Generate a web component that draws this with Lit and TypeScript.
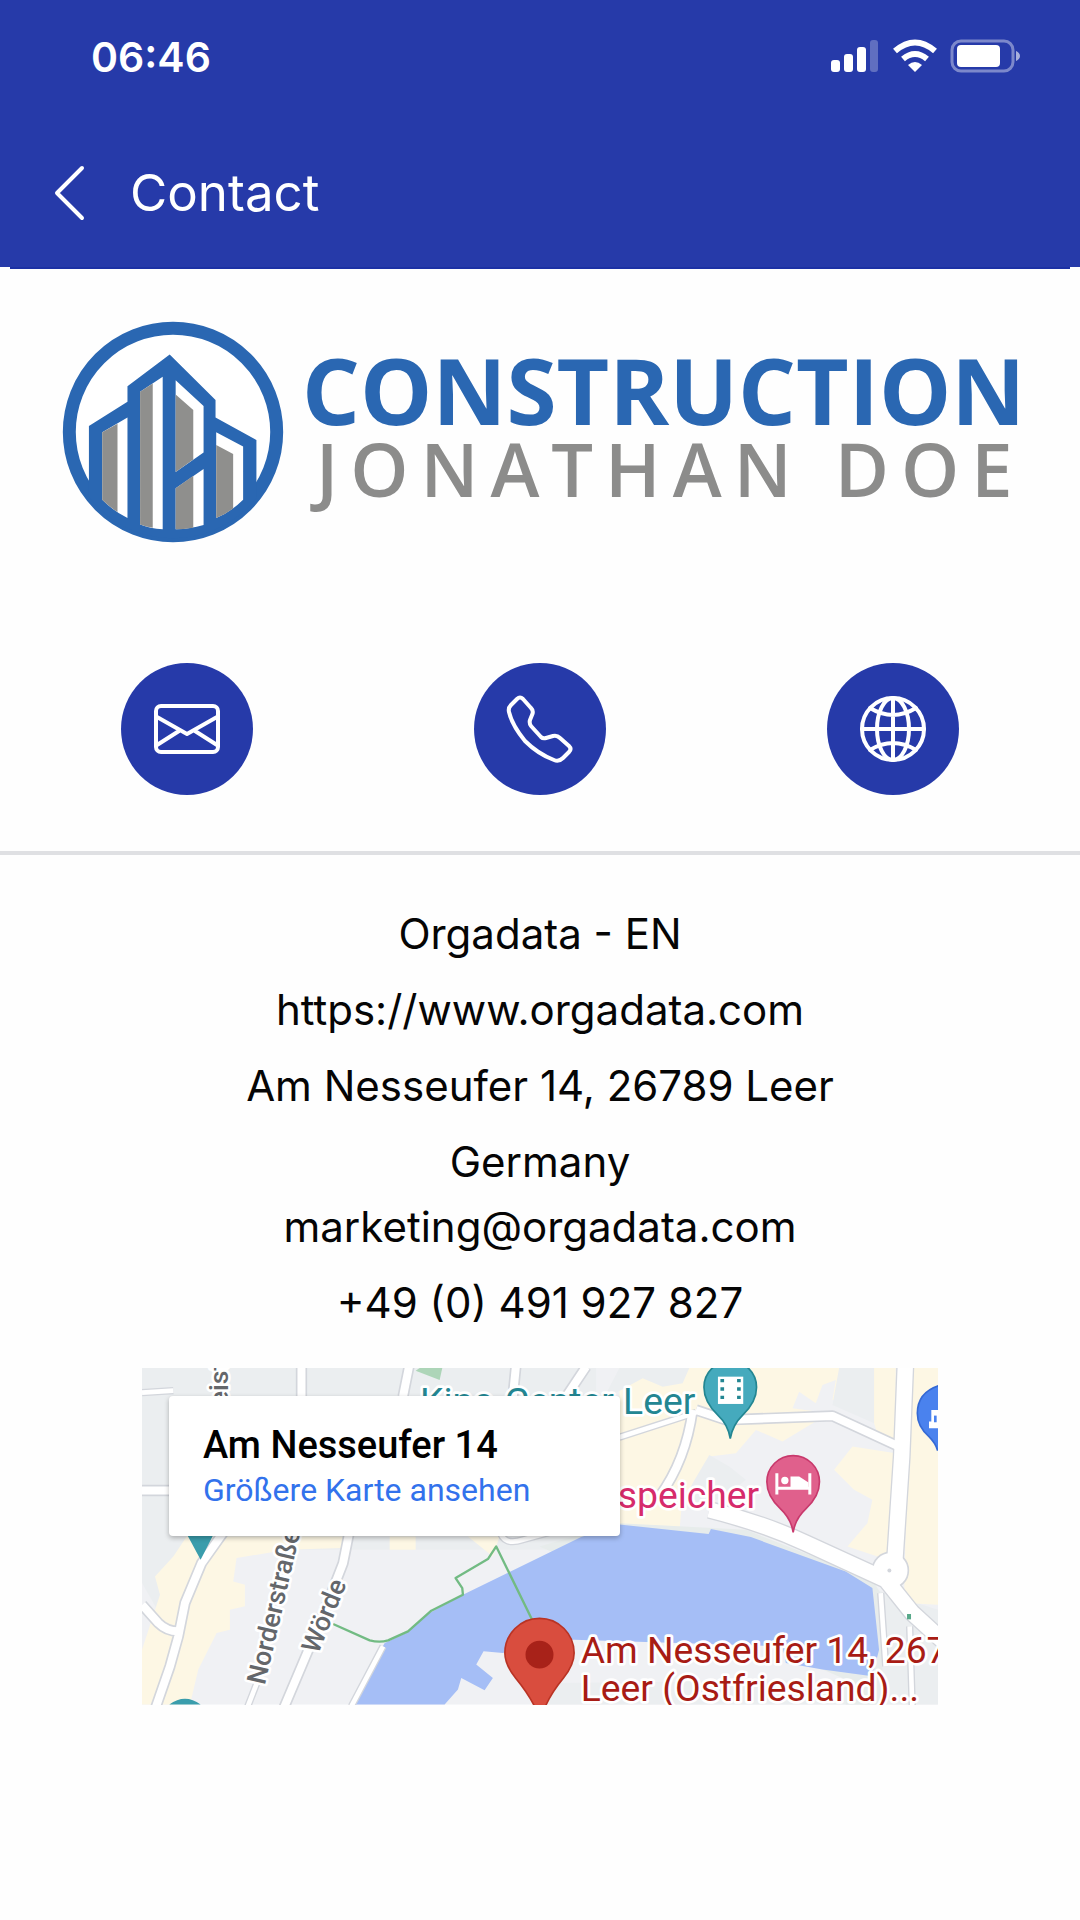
import { LitElement, html, svg, css } from "lit";
import { customElement } from "lit/decorators.js";

const mailIcon = svg`
  <rect x="35" y="43" width="62" height="46" rx="5" />
  <path d="M36 54 L66 71 L96 54 M36 82 L58 68 M96 82 L74 68" />`;

const phoneIcon = svg`
  <path d="M43 36 Q46 33 49 36 L57 45 Q60 48 58 52 L56 57 Q55 60 57 63 L67 74 Q69 76 72 75 L79 73 Q83 72 86 75 L95 83 Q98 86 95 89 L89 95 Q85 99 80 97 Q64 91 51 78 Q38 62 35 49 Q34 45 37 42 Z" />`;

const globeIcon = svg`
  <circle cx="66" cy="66" r="31" />
  <ellipse cx="66" cy="66" rx="16" ry="31" />
  <path d="M66 35 V97 M35 66 H97 M43 45 Q66 59 89 45 M43 87 Q66 73 89 87" />`;

@customElement("status-bar")
export class StatusBar extends LitElement {
  static styles = css`
    :host { display: flex; justify-content: space-between; align-items: flex-start; padding: 32px 60px 0 91px; color: #fff; }
    .time { font-size: 41px; line-height: 50px; font-weight: 600; }
    .signals { width: 190px; height: 34px; margin-top: 7px; display: block; }
  `;
  render() {
    return html`
      <div class="time">06:46</div>
      <svg class="signals" viewBox="0 0 190 34" fill="#fff" aria-hidden="true">
        <rect x="1" y="21" width="9" height="12" rx="3" />
        <rect x="14" y="15" width="9" height="18" rx="3" />
        <rect x="27" y="8" width="9" height="25" rx="3" />
        <rect x="40" y="1" width="8" height="32" rx="3" opacity="0.27" />
        <path d="M85 33 L78 26 Q85 20 92 26 Z" />
        <path d="M73 20 Q85 10 97 20" fill="none" stroke="#fff" stroke-width="6" />
        <path d="M65 12 Q85 -5 105 12" fill="none" stroke="#fff" stroke-width="6" />
        <rect x="122" y="2" width="61" height="30" rx="9" fill="none" stroke="#fff" stroke-width="3" opacity="0.4" />
        <rect x="127" y="6" width="43" height="22" rx="4" />
        <path d="M186 12 Q190 14 190 17 Q190 20 186 22 Z" opacity="0.6" />
      </svg>
    `;
  }
}

@customElement("company-logo")
export class CompanyLogo extends LitElement {
  static styles = css`
    :host { display: flex; gap: 18px; align-items: flex-start; font-family: "Open Sans", sans-serif; }
    .mark { width: 222px; height: 222px; flex: none; display: block; }
    .words { display: flex; flex-direction: column; padding-top: 17px; white-space: nowrap; }
    .name { font-size: 91px; line-height: 104px; font-weight: 700; color: #2a67b2; }
    .owner { font-size: 74px; line-height: 54px; font-weight: 600; color: #8c8c8b; letter-spacing: 12px; padding-left: 14px; }
  `;
  render() {
    return html`
      <svg class="mark" viewBox="67 62 664 668" aria-hidden="true">
        <clipPath id="disc"><circle cx="399" cy="396" r="320" /></clipPath>
        <circle cx="399" cy="396" r="312" fill="#fff" stroke="#2a67b2" stroke-width="39" />
        <path clip-path="url(#disc)" fill="#2a67b2"
          d="M146 730 V378 L262 305 V258 L389 163 L527 300 V352 L650 420 V730 Z" />
        <path fill="#fff" d="M186 397 L262 352 V655 Q220 634 186 600 Z M300 275 L368 230 V689 Q330 686 300 674 Z M407 240 L491 318 V458 L407 516 Z M407 565 L491 507 V676 Q450 688 407 689 Z M529 397 L610 440 V600 Q575 635 529 655 Z" />
        <path fill="#8f8f8d" d="M186 397 L232 371 V637 Q206 620 186 600 Z M300 275 L338 250 V684 Q318 681 300 674 Z M407 283 L460 330 V479 L407 516 Z M407 565 L460 528 V684 Q430 689 407 689 Z M529 435 L580 462 V626 Q556 644 529 655 Z" />
      </svg>
      <div class="words">
        <div class="name">CONSTRUCTION</div>
        <div class="owner">JONATHAN DOE</div>
      </div>
    `;
  }
}

@customElement("location-map")
export class LocationMap extends LitElement {
  static styles = css`
    :host { display: block; position: relative; overflow: hidden; font-family: Roboto, sans-serif; }
    .map { display: block; width: 100%; height: auto; }
    .card { position: absolute; left: 27px; top: 28px; width: 451px; height: 140px; box-sizing: border-box; padding: 27px 34px; background: #fff; border-radius: 4px; box-shadow: 0 2px 5px rgba(0, 0, 0, 0.28); white-space: nowrap; }
    .place { font-size: 38px; line-height: 44px; font-weight: 500; color: #000; }
    .larger { display: block; font-size: 32px; line-height: 46px; color: #3272ec; text-decoration: none; }
    .label { font-size: 112px; stroke: #fff; stroke-width: 16px; stroke-linejoin: round; paint-order: stroke; }
    .street { font-size: 80px; font-weight: 500; fill: #64676b; }
    .teal { fill: #238692; }
    .pink { fill: #d62b6b; }
    .red { fill: #a81c15; }
    .edge { fill: none; stroke: #d3d6dc; stroke-linejoin: round; }
    .road { fill: none; stroke: #fff; stroke-linejoin: round; }
    .trail { fill: none; stroke: #72bb83; stroke-width: 7px; stroke-linejoin: round; }
  `;
  render() {
    const wide = "M2330 20 L2318 320 L2295 670 M1740 480 Q1900 520 2030 580 L2270 690 L2350 790 L2460 890";
    const medium = "M300 520 L215 640 L165 760 L145 860 L120 950 L75 1080 M36 765 L85 820 Q110 845 145 845 M660 540 L640 640 L570 820 L460 1080 M515 40 V140 M840 40 L820 140 M1160 40 L1150 140 M36 422 H120 M1370 50 L1310 140 M1700 180 L1790 210 L2110 198 L2310 290 M1690 180 Q1670 330 1590 440";
    const narrow = "M36 128 L130 122 M1470 262 L1700 188 M385 990 L350 1080 M1110 540 Q1120 590 1180 570 L1290 540 M760 890 L665 1070 M2255 730 L2270 950 M2342 830 L2350 1080";
    return html`
      <svg class="map" viewBox="36 54 2391 1011" role="img" aria-label="Am Nesseufer 14, Leer">
        <rect x="36" y="54" width="2391" height="1011" fill="#f0f1f4" />
        <path fill="#ebeef0" d="M36 54 H1400 V600 H300 L150 900 L36 700 Z M2240 720 L2427 780 V1065 H1250 L1280 1000 L2240 990 Z" />
        <path fill="#fdf7e4" d="M170 560 H640 V595 L470 600 L320 625 L310 695 L345 705 V770 L300 780 V840 L260 850 L205 960 L180 1065 H36 V900 L90 735 L75 680 L130 620 Z M780 560 H858 V600 H780 Z M1015 560 H1110 L1090 620 Z" />
        <path fill="#fdf7e4" d="M1470 54 H2300 V280 L2245 252 L2235 220 L2230 170 L2110 150 L2120 90 L2080 105 L2060 160 L2010 125 L1990 175 L2100 190 L1960 275 L1880 240 L1820 310 L1740 320 L1720 400 L1660 430 L1650 550 L1470 530 Z M2170 290 L2300 310 L2275 630 L2155 590 L2215 520 L2230 450 L2175 420 L2115 360 Z M2340 54 H2427 V765 L2325 760 Z" />
        <path fill="#ebeef0" d="M1470 54 H1680 L1660 100 L1600 110 L1540 85 L1420 150 Z M1740 315 L1800 350 L1850 390 L1800 430 L1720 470 L1650 480 L1690 400 Z M2130 54 H2235 V220 L2110 165 Z" />
        <path fill="#e7eceb" d="M1230 590 L1470 520 L1850 540 L2230 690 L2260 740 V1065 H2150 V990 Z" />
        <path fill="#a5bef6" d="M675 1065 L725 950 L765 880 L830 850 L900 790 L1000 735 L1355 562 L1470 524 L1738 553 L1745 538 L1865 562 L2150 665 L2230 715 L2250 900 L2230 980 L2080 960 L1970 940 L1960 890 L1335 870 L1240 870 L1120 910 L1062 905 L1040 945 L1090 985 L1065 1022 L995 985 L985 1020 L945 1065 Z" />
        <path fill="#add5b8" d="M858 62 L870 54 H938 L930 90 Z" />
        <path class="edge" stroke-width="54" d=${wide} />
        <path class="edge" stroke-width="34" d=${medium} />
        <path class="edge" stroke-width="22" d=${narrow} />
        <circle cx="2284" cy="662" r="54" fill="#fff" stroke="#d3d6dc" stroke-width="5" />
        <path class="road" stroke-width="46" d=${wide} />
        <path class="road" stroke-width="24" d=${medium} />
        <path class="road" stroke-width="14" d=${narrow} />
        <circle cx="2281" cy="662" r="6" fill="#d3d6dc" />
        <rect x="2334" y="793" width="12" height="16" fill="#58a98a" />
        <path class="trail" d="M610 823 L720 872 Q750 880 775 872 L835 845 L905 783 L1000 735 L998 715 L978 685 L1075 628 L1100 590 L1210 815" />
        <path fill="#3a9dac" d="M172 556 H250 L212 630 Z M118 1065 Q165 1030 212 1065 Z" />

        <text class="label street" transform="translate(295 166) rotate(-90)">eist</text>
        <text class="label street" transform="translate(405 1008) rotate(-77)">Norderstraße</text>
        <text class="label street" transform="translate(565 915) rotate(-68)">Wörde</text>
        <text class="label teal" x="1698" y="193" text-anchor="end">Kino-Center Leer</text>
        <text class="label pink" x="1465" y="474">speicher</text>

        <path fill="#45aabd" stroke="#238692" stroke-width="5" d="M1803 266 Q1797 225 1765 195 Q1724 155 1724 112 A79 79 0 0 1 1882 112 Q1882 155 1841 195 Q1810 225 1803 266 Z" />
        <path fill="#fff" d="M1766 80 H1842 V162 H1766 Z" />
        <path stroke="#238692" stroke-width="11" stroke-dasharray="10 15" d="M1779 87 V162 M1829 87 V162" />
        <path fill="#e0608c" stroke="#c8396c" stroke-width="5" d="M1992 548 Q1986 507 1954 477 Q1913 440 1913 396 A79 79 0 0 1 2071 396 Q2071 440 2030 477 Q1998 507 1992 548 Z" />
        <path fill="none" stroke="#fff" stroke-width="9" d="M1943 370 V434 M2042 370 V434 M1943 415 H2042" />
        <path fill="#fff" d="M1984 412 V380 H2010 L2038 398 V412 Z" />
        <circle cx="1967" cy="392" r="11" fill="#fff" />
        <path fill="#4a82ee" stroke="#3569d4" stroke-width="5" d="M2435 105 Q2365 125 2365 190 Q2365 230 2400 260 Q2420 280 2425 300 H2435 Z" />
        <path fill="#fff" d="M2407 180 H2435 V235 H2400 V215 H2407 Z" />
        <rect x="2415" y="197" width="8" height="20" fill="#4a82ee" />
        <path fill="#d94d3e" stroke="#b93324" stroke-width="5" d="M1215 1070 Q1195 1030 1158 985 Q1126 945 1126 910 A104 104 0 0 1 1334 910 Q1334 945 1302 985 Q1265 1030 1248 1070 Z" />
        <circle cx="1230" cy="915" r="42" fill="#a82219" />

        <text class="label red" x="1354" y="940">Am Nesseufer 14, 26789</text>
        <text class="label red" x="1354" y="1054">Leer (Ostfriesland)...</text>
      </svg>
      <div class="card">
        <div class="place">Am Nesseufer 14</div>
        <a class="larger" href="#map">Größere Karte ansehen</a>
      </div>
    `;
  }
}

@customElement("app-root")
export class AppRoot extends LitElement {
  static styles = css`
    :host { display: block; min-height: 100vh; background: #fefefe; color: #050505; font-family: Inter, "Liberation Sans", sans-serif; }
    .top { background: #263aa9; }
    .nav { display: flex; align-items: center; gap: 42px; padding: 78px 52px 41px; height: 66px; color: #fff; }
    .back { display: block; width: 36px; height: 66px; padding: 0; border: 0; background: none; }
    .back svg { display: block; width: 36px; height: 66px; }
    .title { margin: 0; font-size: 51px; line-height: 66px; font-weight: 400; }
    .page { margin: 0 10px; border-top: 2px solid #1c31a4; }
    .logo { padding: 52px 52px 0; }
    .actions { display: grid; grid-template-columns: repeat(3, 1fr); justify-items: center; padding: 120px 0 56px; }
    .action { display: block; width: 132px; height: 132px; border-radius: 50%; background: #263aa9; }
    .action svg { display: block; width: 132px; height: 132px; fill: none; stroke: #fff; stroke-width: 4px; stroke-linecap: round; stroke-linejoin: round; }
    .rule { margin: 0 -10px; border: 0; height: 4px; background: #dfe0e3; }
    .details { display: flex; flex-direction: column; gap: 11px; align-items: center; padding: 46px 0 33px; font-size: 42px; line-height: 65px; text-align: center; font-style: normal; }
    .details a { color: inherit; text-decoration: none; }
    .region { display: flex; flex-direction: column; align-items: center; }
    .place { margin: 0 132px; }
  `;
  render() {
    return html`
      <header class="top">
        <status-bar></status-bar>
        <div class="nav">
          <button class="back" aria-label="Back">
            <svg viewBox="0 0 36 66" fill="none" stroke="#fff" stroke-width="4" stroke-linecap="round" stroke-linejoin="round"><path d="M30 8 L5 33 L30 58" /></svg>
          </button>
          <h1 class="title">Contact</h1>
        </div>
      </header>
      <main class="page">
        <company-logo class="logo"></company-logo>
        <nav class="actions">
          <a class="action" href="mailto:marketing@orgadata.com" aria-label="Email"><svg viewBox="0 0 132 132">${mailIcon}</svg></a>
          <a class="action" href="tel:+49491927827" aria-label="Phone"><svg viewBox="0 0 132 132">${phoneIcon}</svg></a>
          <a class="action" href="https://www.orgadata.com" aria-label="Website"><svg viewBox="0 0 132 132">${globeIcon}</svg></a>
        </nav>
        <hr class="rule" />
        <address class="details">
          <div>Orgadata - EN</div>
          <a href="https://www.orgadata.com">https://www.orgadata.com</a>
          <div>Am Nesseufer 14, 26789 Leer</div>
          <div class="region">
            <div>Germany</div>
            <a href="mailto:marketing@orgadata.com">marketing@orgadata.com</a>
          </div>
          <a href="tel:+49491927827">+49 (0) 491 927 827</a>
        </address>
        <location-map class="place"></location-map>
      </main>
    `;
  }
}
